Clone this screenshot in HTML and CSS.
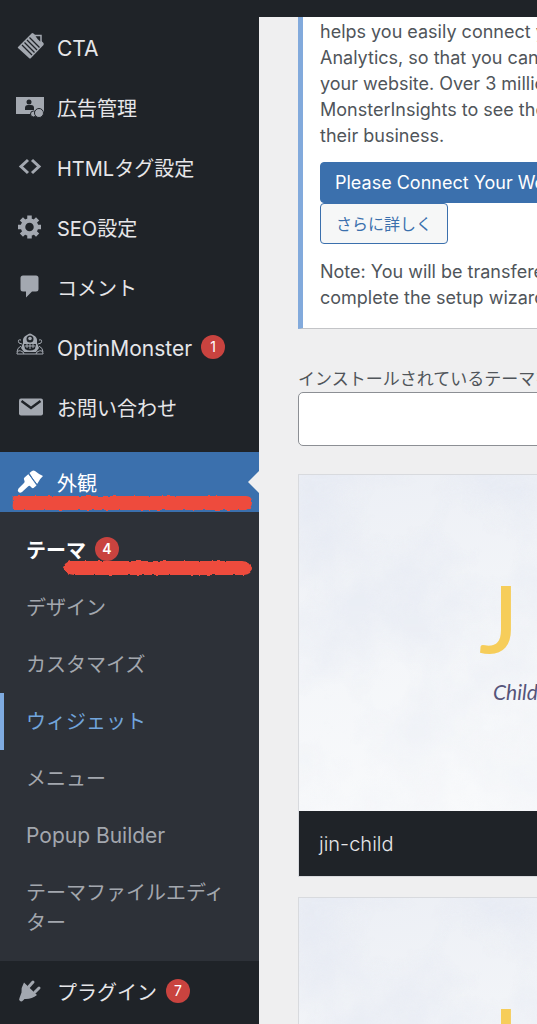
FILE: index.html
```html
<!DOCTYPE html>
<html lang="ja">
<head>
    <meta charset="UTF-8">
    <meta name="viewport" content="width=device-width, initial-scale=1.0">
    <title>テーマの管理</title>
    <link rel="stylesheet" href="styles.css">
</head>
<body>
    <!-- 共通フィルター -->
    <svg class="defs" width="0" height="0" aria-hidden="true">
        <filter id="rough" x="-5%" y="-30%" width="110%" height="160%">
            <feTurbulence type="fractalNoise" baseFrequency="0.2" numOctaves="2" seed="4" />
            <feDisplacementMap in="SourceGraphic" scale="3" xChannelSelector="R" yChannelSelector="G" />
        </filter>
        <filter id="marble" x="0" y="0" width="100%" height="100%">
            <feTurbulence type="fractalNoise" baseFrequency="0.013 0.011" numOctaves="6" seed="11" />
            <feColorMatrix values="0 0 0 0 0.80  0 0 0 0 0.83  0 0 0 0 0.90  2.4 0 0 0 -0.85" />
        </filter>
    </svg>

    <header class="adminbar"></header>
    <div class="layout">
        <nav class="sidebar">
            <ul class="menu">
                <li><a href="#" class="menu-item">
                    <svg class="icon" viewBox="0 0 28 28">
                        <path d="M2 14 15.500 0.500Q16.500-.5 17.500.5L27.500 10Q28 11 27.500 12L15 25Q14 26 13 25L2 15Q1.500 14.500 2 14Z" />
                        <path class="cut" d="m11 7 10 10M8.500 9.500l10 10M6 12l10 10M13.500 4.500l10 10" />
                        <path class="line" d="M18 2.500h7v8l-4-4z" />
                    </svg>
                    <span lang="en">CTA</span>
                </a></li>
                <li><a href="#" class="menu-item">
                    <svg class="icon" viewBox="0 0 28 28">
                        <path d="M0 4h28v17H0z" />
                        <circle class="dark" cx="13" cy="9" r="2.500" />
                        <path class="dark" d="M9 17v-2q0-3 3-3h3q3 0 3 3v2z" />
                        <circle class="coin" cx="17.500" cy="21" r="3" />
                        <circle class="coin" cx="23" cy="20" r="4.500" />
                    </svg>
                    <span>広告管理</span>
                </a></li>
                <li><a href="#" class="menu-item">
                    <svg class="icon" viewBox="0 0 28 28">
                        <path class="code" d="m12 7-7 6.500 7 6.500M16 7l7 6.500-7 6.500" />
                    </svg>
                    <span>HTMLタグ設定</span>
                </a></li>
                <li><a href="#" class="menu-item">
                    <svg class="icon" viewBox="0 0 28 28">
                        <circle class="gear" cx="13.500" cy="14" r="6.500" />
                        <path class="teeth" d="M13.500 2.500v4M13.500 21.500v4M2 14h4M21 14h4M5.400 5.900l2.800 2.800M18.800 19.300l2.800 2.800M5.400 22.100l2.800-2.800M18.800 8.700l2.800-2.800" />
                    </svg>
                    <span>SEO設定</span>
                </a></li>
                <li><a href="#" class="menu-item">
                    <svg class="icon" viewBox="0 0 28 28">
                        <path d="M7 2.500h13q2.500 0 2.500 2.500v11q0 2.500-2.500 2.500h-4L10 24.500v-6H7Q4.500 18.500 4.500 16V5Q4.500 2.500 7 2.500Z" />
                    </svg>
                    <span>コメント</span>
                </a></li>
                <li><a href="#" class="menu-item">
                    <svg class="icon" viewBox="0 0 28 28">
                        <path d="M7 10Q6 4 11 2q3-3 6 0 5 2 4 8l2 5-3 4H8l-3-4z" />
                        <circle class="dark" cx="14" cy="6" r="3.500" />
                        <circle cx="14" cy="5.500" r="1.800" />
                        <path class="dark" d="M8 11h12l-1 5q-5 3-10 0z" />
                        <path class="thin" d="M9 13h10M11 11v4M14 11v5M17 11v4M5 7Q1 6 3 10l3 1M23 7q4-1 2 3l-3 1M5 13q-4 2-4 6M23 13q4 2 4 6M1 20q1-4 6-1l1 2H1zM27 20q-1-4-6-1l-1 2h7zM8 21h12" />
                    </svg>
                    <span lang="en">OptinMonster</span><span class="badge">1</span>
                </a></li>
                <li><a href="#" class="menu-item">
                    <svg class="icon" viewBox="0 0 28 28">
                        <rect x="3" y="5.500" width="24" height="17" rx="2" />
                        <path class="flap" d="m5.500 8 9.500 7 9.500-7" />
                    </svg>
                    <span>お問い合わせ</span>
                </a></li>

                <li class="current">
                    <a href="#" class="menu-item">
                        <svg class="icon" viewBox="0 0 28 28">
                            <path d="M13.500 5 16 3q1.500-1 3 0 3.500 3 8 5-3.500 3-5.500 7.500l-1 1z" />
                            <path d="m12.500 6 8 11.500-3 2.500q-1 .5-2-.5l-1.500-1.500q-1-.5-2 .5L6 24q-2 1.500-3.500 0t0-3.500l5.500-5.500q1-1 .5-2L8 11.500q-.5-1 .5-2z" />
                            <path class="ferrule" d="m12 5 9.500 12" />
                        </svg>
                        <span>外観</span>
                    </a>
                    <svg class="marker marker-parent" viewBox="0 0 240 16" preserveAspectRatio="none" aria-hidden="true">
                        <path d="M2 1h232q6 0 6 6t-6 8H2Q0 14 1 8 0 2 2 1Z" />
                    </svg>
                </li>
            </ul>

            <ul class="submenu">
                <li>
                    <a href="#" class="selected">テーマ<span class="badge">4</span></a>
                    <svg class="marker marker-child" viewBox="0 0 190 16" preserveAspectRatio="none" aria-hidden="true">
                        <path d="M8 1h172q10 1 10 7t-8 7H12Q3 14 1 8q1-5 7-7Z" />
                    </svg>
                </li>
                <li><a href="#">デザイン</a></li>
                <li><a href="#">カスタマイズ</a></li>
                <li><a href="#" class="hover">ウィジェット</a></li>
                <li><a href="#">メニュー</a></li>
                <li><a href="#" lang="en">Popup Builder</a></li>
                <li><a href="#">テーマファイルエディター</a></li>
            </ul>

            <ul class="menu">
                <li><a href="#" class="menu-item">
                    <svg class="icon" viewBox="0 0 28 28">
                        <path d="M8 5.500q-3 5-2.500 10L3.500 21q-1 2 .5 3t3-.500l1.500-1.500q7 .5 12.500-4z" />
                        <path class="prong" d="m13 9.500 4-4.500M19 15l4-4" />
                    </svg>
                    <span>プラグイン</span><span class="badge">7</span>
                </a></li>
            </ul>
        </nav>

        <main class="content">
            <section class="notice">
                <p>helps you easily connect your<br>
                    Analytics, so that you can<br>
                    your website. Over 3 million<br>
                    MonsterInsights to see the<br>
                    their business.</p>
                <div class="actions">
                    <button type="button" class="button primary">Please Connect Your Website</button>
                    <button type="button" class="button">さらに詳しく</button>
                </div>
                <p>Note: You will be transfered<br>
                    complete the setup wizard</p>
            </section>

            <div class="search">
                <label for="theme-search">インストールされているテーマを検索</label>
                <input type="search" id="theme-search">
            </div>

            <div class="themes">
                <article class="theme">
                    <div class="screenshot">
                        <svg class="texture" aria-hidden="true"><rect width="100%" height="100%" filter="url(#marble)" /></svg>
                        <div class="logo"><span>J</span><span>I</span><span>N</span></div>
                        <span class="tagline">Child Theme</span>
                    </div>
                    <h2 class="theme-name">jin-child</h2>
                </article>
                <article class="theme">
                    <div class="screenshot">
                        <svg class="texture" aria-hidden="true"><rect width="100%" height="100%" filter="url(#marble)" /></svg>
                        <div class="logo"><span>J</span><span>I</span><span>N</span></div>
                    </div>
                </article>
            </div>
        </main>
    </div>
</body>
</html>
```
FILE: styles.css
```css
* {
    box-sizing: border-box;
}
body {
    margin: 0;
    height: 100vh;
    display: flex;
    flex-direction: column;
    overflow: hidden;
    background-color: #efeff0;
    color: #50555a;
    font-family: Inter, "Noto Sans CJK JP", sans-serif;
    font-size: 18px;
    line-height: 26px;
}
ul {
    list-style: none;
    margin: 0;
    padding: 0;
}
a {
    text-decoration: none;
}
.defs {
    position: absolute;
}
.adminbar {
    flex: none;
    height: 17px;
    background-color: #1f2328;
}
.layout {
    flex: 1;
    min-height: 0;
    display: flex;
}

/* サイドバー */
.sidebar {
    flex: none;
    width: 259px;
    background-color: #1f2328;
    font-size: 20px;
    line-height: 30px;
}
.sidebar :lang(en) {
    font-size: 21px;
}
.menu-item {
    display: flex;
    align-items: center;
    height: 60px;
    padding: 3px 16px 0;
    color: #e6e6e9;
}
.icon {
    width: 28px;
    height: 28px;
    margin: 0 13px 3px 0;
    overflow: visible;
    fill: #a3a8b0;
}
.icon .dark {
    fill: #1f2328;
}
.icon .coin {
    stroke: #1f2328;
    stroke-width: 1;
}
.icon .cut,
.icon .line,
.icon .code,
.icon .gear,
.icon .teeth,
.icon .thin,
.icon .flap,
.icon .prong,
.icon .ferrule {
    fill: none;
    stroke: #a3a8b0;
}
.icon .cut {
    stroke: #1f2328;
    stroke-width: 1.3;
}
.icon .line {
    fill: #1f2328;
    stroke-width: 1.5;
}
.icon .code {
    stroke-width: 3;
}
.icon .gear {
    stroke-width: 4.5;
}
.icon .teeth {
    stroke-width: 4.5;
}
.icon .thin {
    stroke-width: 1;
}
.icon .flap {
    stroke: #1f2328;
    stroke-width: 2.5;
}
.icon .prong {
    stroke-width: 3;
    stroke-linecap: round;
}
.icon .ferrule {
    stroke: #3b70ad;
    stroke-width: 1;
}
.badge {
    display: inline-flex;
    justify-content: center;
    align-items: center;
    width: 24px;
    height: 24px;
    margin: 0 0 4px 9px;
    border-radius: 50%;
    background-color: #c9433f;
    color: #fff;
    font-size: 14px;
    font-weight: 400;
    line-height: 24px;
}
.current {
    position: relative;
    margin-top: 15px;
    background-color: #3b70ad;
}
.current .menu-item {
    color: #fff;
}
.current .icon {
    fill: #fff;
}
.current::after {
    content: "";
    position: absolute;
    right: 0;
    top: 19px;
    border: 11px solid transparent;
    border-left: 0;
    border-right-color: #efeff0;
}
.submenu {
    padding: 10px 0;
    background-color: #2d3138;
}
.submenu li {
    position: relative;
}
.submenu a {
    display: block;
    padding: 14px 20px 13px 26px;
    color: #a3a7ae;
}
.submenu a.selected {
    display: flex;
    align-items: center;
    color: #fff;
    font-weight: 700;
}
.submenu .selected .badge {
    font-weight: 600;
}
.submenu a.hover {
    color: #72a5dc;
    box-shadow: inset 4px 0 0 #7fabe0;
}

/* 赤いマーカー線 */
.marker {
    position: absolute;
    height: 16px;
    fill: #ee4c3c;
    filter: url(#rough);
    pointer-events: none;
}
.marker-parent {
    left: 12px;
    width: 240px;
    bottom: 1px;
}
.marker-child {
    left: 62px;
    width: 190px;
    bottom: 3px;
    z-index: 1;
}

/* コンテンツ */
.content {
    flex: 1;
    min-width: 0;
    padding-left: 39px;
    overflow: hidden;
    white-space: nowrap;
}
.notice,
.search,
.themes {
    min-width: 504px;
}
.notice {
    padding: 2px 17px 17px;
    border-left: 5px solid #82aadc;
    border-bottom: 1px solid #c3c4c7;
    background-color: #fff;
}
.notice p {
    margin: 0;
}
.actions {
    display: flex;
    flex-direction: column;
    align-items: flex-start;
    margin: 13px 0 15px;
}
.button {
    height: 41px;
    padding: 0 15px 2px;
    border: 1px solid #3b70ad;
    border-radius: 4px;
    background-color: #f6f7f7;
    color: #3b70ad;
    font-family: inherit;
    font-size: 16px;
}
.button.primary {
    padding: 0 14px;
    background-color: #3b70ad;
    color: #fff;
    font-size: 18px;
}
.search {
    display: flex;
    flex-direction: column;
    margin: 37px 0 28px;
}
.search label {
    font-size: 17px;
}
.search input {
    height: 54px;
    padding: 0 12px;
    border: 1px solid #8c8f94;
    border-radius: 5px;
    background-color: #fff;
    font-size: 17px;
}
.themes {
    display: grid;
    gap: 20px;
}
.theme {
    border: 1px solid #d8dade;
}
.screenshot {
    position: relative;
    display: flex;
    flex-direction: column;
    height: 336px;
    padding: 90px 0 0 180px;
    background: linear-gradient(170deg, #eceff5, #f4f6f9 45%, #fafbfc);
}
.texture {
    position: absolute;
    inset: 0;
    width: 100%;
    height: 100%;
    -webkit-mask-image: linear-gradient(#000, rgba(0, 0, 0, 0.2));
    mask-image: linear-gradient(#000, rgba(0, 0, 0, 0.2));
}
.logo {
    position: relative;
    display: flex;
    gap: 24px;
    color: #f6cd5a;
    font-family: Lato, sans-serif;
    font-size: 93px;
    font-weight: 500;
    line-height: 104px;
}
.tagline {
    position: relative;
    margin: 10px 0 0 14px;
    color: #56557a;
    font-family: Lato, sans-serif;
    font-size: 21px;
    font-style: italic;
}
.theme-name {
    margin: 0;
    padding: 18px 20px 17px;
    background-color: #1f2328;
    color: #e6e6e8;
    font-size: 20px;
    font-weight: 300;
    line-height: 30px;
}
```
